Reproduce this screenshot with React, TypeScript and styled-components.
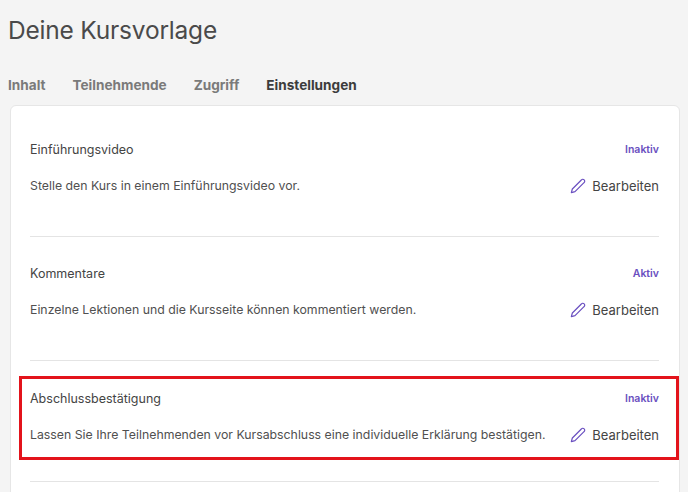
import React from "react";
import styled, { createGlobalStyle } from "styled-components";

const Global = createGlobalStyle`
  html, body { margin: 0; padding: 0; background: #f4f4f4; font-family: Inter, "Noto Sans", sans-serif; }
`;

const Page = styled.div`
  padding: 12px 8px 0 8px;
  height: 480px;
  overflow: hidden;
`;

const Title = styled.h1`
  margin: 0;
  font-size: 24.5px;
  font-weight: 400;
  color: #4a4a4a;
  line-height: 36px;
  letter-spacing: -0.2px;
`;

const Tabs = styled.div`
  display: flex;
  gap: 27px;
  margin-top: 27px;
  height: 20px;
  align-items: center;
`;

const Tab = styled.span<{ $active?: boolean }>`
  font-size: 13.6px;
  font-weight: 700;
  color: ${(p) => (p.$active ? "#3c3c3c" : "#7a7a7a")};
`;

const Card = styled.div`
  margin: 10px 0 0 2px;
  width: 670px;
  background: #fff;
  border: 1px solid #e6e6e6;
  border-radius: 6px;
  padding: 0 20px 0 19px;
  box-sizing: border-box;
  min-height: 400px;
`;

const Section = styled.div<{ $first?: boolean }>`
  padding: ${(p) => (p.$first ? "35px" : "28px")} 0 40px;
  border-bottom: 1px solid #e4e4e4;
`;

const HSection = styled.div`
  padding: 15px 0 21px;
  border-bottom: 1px solid #e4e4e4;
`;

const Highlight = styled.div`
  border: 3px solid #e3131b;
  margin: 0 -20px 0 -11px;
  padding: 11px 17px 12px 8px;
`;

const Row = styled.div<{ $gap?: number }>`
  display: flex;
  justify-content: space-between;
  align-items: center;
  margin-top: ${(p) => p.$gap ?? 0}px;
`;

const Name = styled.span`
  font-size: 12.5px;
  color: #444;
  line-height: 18px;
`;

const Status = styled.span`
  font-size: 10.5px;
  font-weight: 600;
  color: #6a4fc0;
  line-height: 18px;
`;

const Desc = styled.span`
  font-size: 12.3px;
  color: #505050;
  line-height: 20px;
  white-space: nowrap;
`;

const Edit = styled.span`
  display: flex;
  align-items: center;
  gap: 6px;
  font-size: 13px;
  color: #444;
  line-height: 20px;
`;

const Pencil = () => (
  <svg width="16" height="16" viewBox="0 0 24 24" fill="none" stroke="#6a4fc0" strokeWidth="1.8" strokeLinecap="round" strokeLinejoin="round">
    <path d="M17 3a2.85 2.85 0 1 1 4 4L7.5 20.5 2 22l1.5-5.5Z" />
  </svg>
);

const Item = ({ name, status, desc }: { name: string; status: string; desc: string }) => (
  <>
    <Row>
      <Name>{name}</Name>
      <Status>{status}</Status>
    </Row>
    <Row $gap={17}>
      <Desc>{desc}</Desc>
      <Edit>
        <Pencil />
        Bearbeiten
      </Edit>
    </Row>
  </>
);

export default function App() {
  return (
    <>
      <Global />
      <Page>
        <Title>Deine Kursvorlage</Title>
        <Tabs>
          <Tab>Inhalt</Tab>
          <Tab>Teilnehmende</Tab>
          <Tab>Zugriff</Tab>
          <Tab $active>Einstellungen</Tab>
        </Tabs>
        <Card>
          <Section $first>
            <Item name="Einführungsvideo" status="Inaktiv" desc="Stelle den Kurs in einem Einführungsvideo vor." />
          </Section>
          <Section>
            <Item name="Kommentare" status="Aktiv" desc="Einzelne Lektionen und die Kursseite können kommentiert werden." />
          </Section>
          <HSection>
            <Highlight>
              <Item
                name="Abschlussbestätigung"
                status="Inaktiv"
                desc="Lassen Sie Ihre Teilnehmenden vor Kursabschluss eine individuelle Erklärung bestätigen."
              />
            </Highlight>
          </HSection>
        </Card>
      </Page>
    </>
  );
}
